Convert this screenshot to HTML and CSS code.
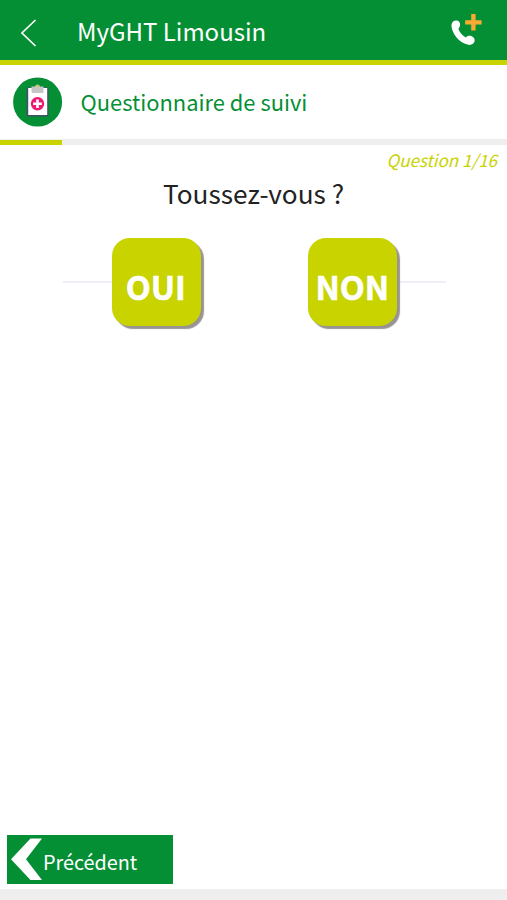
FILE: index.html
```
<!DOCTYPE html>
<html lang="fr">
<head>
    <meta charset="UTF-8">
    <meta name="viewport" content="width=device-width, initial-scale=1.0">
    <title>MyGHT Limousin</title>
    <link rel="stylesheet" href="styles.css">
</head>
<body>
    <header class="topbar">
        <svg class="back" width="16" height="28" viewBox="0 0 16 28">
            <path d="M14.5 1 L1 14 L14.5 27" fill="none" stroke="#fff" stroke-width="1.6"/>
        </svg>
        <h1>MyGHT Limousin</h1>
        <svg class="phone" width="32" height="34" viewBox="0 0 32 34">
            <path d="M5.3 6.6 C8.3 6 10.3 8.2 10.1 11 C10 13 9 14 8.4 14.7 C9.7 18.5 12.3 21.5 15.8 23.4 C17 21.8 19 21.4 21.2 22 C24 22.8 25.2 25.4 24.5 27.6 C23.5 30.6 20.5 31.4 17.5 30.6 C9 28.2 2.5 20.5 1.5 12.5 C1.3 9.3 2.5 7.1 5.3 6.6 Z" fill="#fff"/>
            <path d="M21.2 0 H25.6 V6.2 H31.6 V10.6 H25.6 V16.6 H21.2 V10.6 H15.2 V6.2 H21.2 Z" fill="#f9ab31"/>
        </svg>
    </header>

    <section class="titre">
        <svg class="clipboard" width="50" height="50" viewBox="0 0 50 50">
            <circle cx="24.6" cy="25" r="24.5" fill="#058f35"/>
            <rect x="13.5" y="10.5" width="22" height="29" rx="1" fill="#455064"/>
            <rect x="15.2" y="11" width="19" height="27" fill="#fff"/>
            <path d="M18.5 9.5 H22 Q22.5 7.5 24.7 7.5 Q26.5 7.5 27 9.5 H30.5 V15 Q30.5 16 29.5 16 H19.5 Q18.5 16 18.5 15 Z" fill="#c6c6c6"/>
            <circle cx="24.7" cy="9" r="1" fill="#c8d300"/>
            <circle cx="24.5" cy="26.7" r="6.7" fill="#ea1a75"/>
            <path d="M23.2 22.4 H25.8 V25.4 H28.8 V28 H25.8 V31 H23.2 V28 H20.2 V25.4 H23.2 Z" fill="#fff"/>
        </svg>
        <h2>Questionnaire de suivi</h2>
    </section>

    <div class="progress"><div class="progress-bar"></div></div>

    <main>
        <p class="compteur">Question 1/16</p>
        <p class="question">Toussez-vous ?</p>
        <div class="reponses">
            <span class="ligne"></span>
            <button class="choix">OUI</button>
            <button class="choix">NON</button>
            <span class="ligne"></span>
        </div>
    </main>

    <div class="actions">
        <button class="precedent">
            <svg width="32" height="43" viewBox="0 0 32 43">
                <path d="M19.5 0.5 H31 L15 21.3 L31 42 H19.5 L0 21.3 Z" fill="#fff"/>
            </svg>
            <span>Précédent</span>
        </button>
    </div>
    <footer class="bas"></footer>
</body>
</html>
```
FILE: styles.css
```
* {
    box-sizing: border-box;
}

body {
    margin: 0;
    height: 100vh;
    display: flex;
    flex-direction: column;
    overflow: hidden;
    background-color: white;
    font-family: "Noto Sans CJK SC", "Open Sans", sans-serif;
}

h1, h2, p {
    margin: 0;
    font-weight: normal;
    white-space: nowrap;
}

button {
    border: none;
    color: white;
    font-family: inherit;
    cursor: pointer;
}

/* Barre du haut */
.topbar {
    display: flex;
    align-items: center;
    height: 65px;
    padding: 6px 25px 0 21px;
    background-color: #058f35;
    border-bottom: 5px solid #c8d300;
    color: white;
}

.topbar h1 {
    margin-left: 40px;
    padding-bottom: 4px;
    font-size: 24px;
    line-height: 36px;
}

.phone {
    margin-left: auto;
    margin-top: -5px;
}

/* Titre du questionnaire */
.titre {
    display: flex;
    align-items: center;
    height: 74px;
    padding-left: 12.5px;
}

.titre h2 {
    margin-left: 18px;
    padding-bottom: 1px;
    color: #058f35;
    font-size: 21.9px;
    line-height: 32px;
}

.progress {
    height: 6px;
    padding-top: 1px;
    background-color: #eeeeee;
}

.progress-bar {
    width: 62px;
    height: 5px;
    background-color: #c8d300;
}

main {
    flex: 1;
}

.compteur {
    margin-top: 3px;
    padding-right: 10px;
    color: #c8d300;
    font-size: 17px;
    font-style: italic;
    line-height: 24px;
    text-align: right;
}

.question {
    margin-top: 1px;
    color: #222222;
    font-size: 26.2px;
    line-height: 40px;
    text-align: center;
}

/* Boutons de réponse */
.reponses {
    display: flex;
    align-items: center;
    width: 383px;
    margin: 25px 0 0 63px;
}

.ligne {
    flex: 1;
    height: 2px;
    background-color: #eeeefb;
}

.choix {
    position: relative;
    width: 89px;
    height: 88px;
    padding: 6px 1px 0 0;
    border-radius: 18px;
    background-color: #c8d300;
    box-shadow: 3px 3px 1px #989494;
    font-size: 32.5px;
    font-weight: bold;
    -webkit-text-stroke: 0.6px white;
}

.choix + .choix {
    margin-left: 107.5px;
}

/* Bas de page */
.actions {
    padding: 0 0 5px 7px;
}

.precedent {
    display: flex;
    align-items: center;
    width: 166px;
    height: 49px;
    padding: 0 0 0 4px;
    background-color: #058f35;
    font-size: 19.8px;
}

.precedent span {
    padding-top: 3px;
}

.bas {
    height: 11px;
    background-color: #eeeeee;
}
```
